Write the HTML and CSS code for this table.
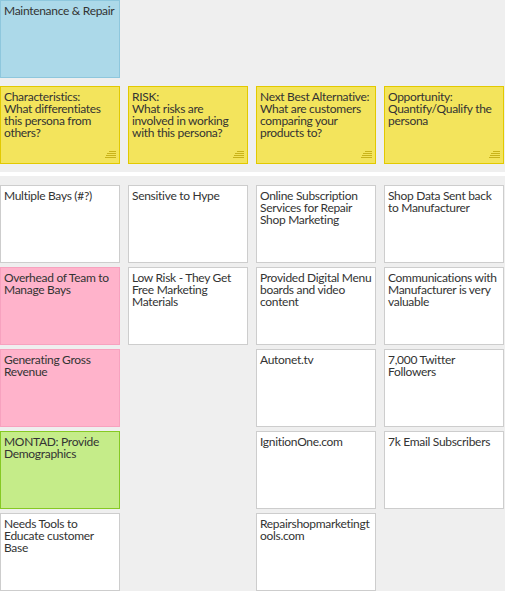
FILE: index.html
```html
<!DOCTYPE html>
<html>
<head>
<meta charset="utf-8">
<link rel="stylesheet" href="styles.css">
</head>
<body>
<div class="board">
  <div class="header-row">
    <div class="note blue">Maintenance &amp; Repair</div>
  </div>
  <div class="header-row">
    <div class="note yellow"><div>Characteristics:</div><div>What differentiates this persona from others?</div><svg class="stack" viewBox="0 0 11 8" width="11" height="8"><path d="M4 0.5H11M2 2.5H11M1 4.5H11M0 6.5H11"/></svg></div>
    <div class="note yellow"><div>RISK:</div><div>What risks are involved in working with this persona?</div><svg class="stack" viewBox="0 0 11 8" width="11" height="8"><path d="M4 0.5H11M2 2.5H11M1 4.5H11M0 6.5H11"/></svg></div>
    <div class="note yellow"><div>Next Best Alternative:</div><div>What are customers comparing your products to?</div><svg class="stack" viewBox="0 0 11 8" width="11" height="8"><path d="M4 0.5H11M2 2.5H11M1 4.5H11M0 6.5H11"/></svg></div>
    <div class="note yellow"><div>Opportunity:</div><div>Quantify/Qualify the persona</div><svg class="stack" viewBox="0 0 11 8" width="11" height="8"><path d="M4 0.5H11M2 2.5H11M1 4.5H11M0 6.5H11"/></svg></div>
  </div>
  <div class="divider"></div>
  <div class="columns">
    <div class="col">
      <div class="note white">Multiple Bays (#?)</div>
      <div class="note pink">Overhead of Team to Manage Bays</div>
      <div class="note pink">Generating Gross Revenue</div>
      <div class="note green">MONTAD: Provide Demographics</div>
      <div class="note white">Needs Tools to Educate customer Base</div>
    </div>
    <div class="col">
      <div class="note white">Sensitive to Hype</div>
      <div class="note white">Low Risk - They Get Free Marketing Materials</div>
    </div>
    <div class="col">
      <div class="note white">Online Subscription Services for Repair Shop Marketing</div>
      <div class="note white">Provided Digital Menu boards and video content</div>
      <div class="note white">Autonet.tv</div>
      <div class="note white">IgnitionOne.com</div>
      <div class="note white">Repairshopmarketingtools.com</div>
    </div>
    <div class="col">
      <div class="note white">Shop Data Sent back to Manufacturer</div>
      <div class="note white">Communications with Manufacturer is very valuable</div>
      <div class="note white">7,000 Twitter Followers</div>
      <div class="note white">7k Email Subscribers</div>
    </div>
  </div>
</div>
</body>
</html>
```
FILE: styles.css
```css
html, body {
  margin: 0;
  padding: 0;
  background: #efefef;
}
body {
  font-family: Lato, "Liberation Sans", sans-serif;
  font-size: 12px;
  line-height: 12px;
  letter-spacing: -0.3px;
  color: #333;
  overflow: hidden;
}
.board {
  display: flex;
  flex-direction: column;
  width: 505px;
}
.header-row {
  display: flex;
  gap: 8px;
  margin-bottom: 8px;
}
.divider {
  height: 4px;
  background: #fff;
  margin: 0 0 9px 0;
}
.columns {
  display: flex;
  gap: 8px;
  align-items: flex-start;
}
.col {
  display: flex;
  flex-direction: column;
  gap: 4px;
  width: 120px;
}
.note {
  position: relative;
  box-sizing: border-box;
  width: 120px;
  height: 78px;
  border: 1px solid #cfcfcf;
  padding: 4px 3px 3px 3px;
  overflow-wrap: anywhere;
}
.blue {
  background: #acd9e9;
  border-color: #8ec7dd;
}
.yellow {
  background: #f3e45c;
  border-color: #e2c900;
}
.pink {
  background: #ffb3cb;
  border-color: #f7a2bf;
}
.green {
  background: #c5ec89;
  border-color: #86c923;
}
.white {
  background: #fff;
  border-color: #cdcdcd;
}
.stack {
  position: absolute;
  right: 3px;
  bottom: 4px;
  stroke: #c9b31a;
  stroke-width: 1;
  fill: none;
}
```
